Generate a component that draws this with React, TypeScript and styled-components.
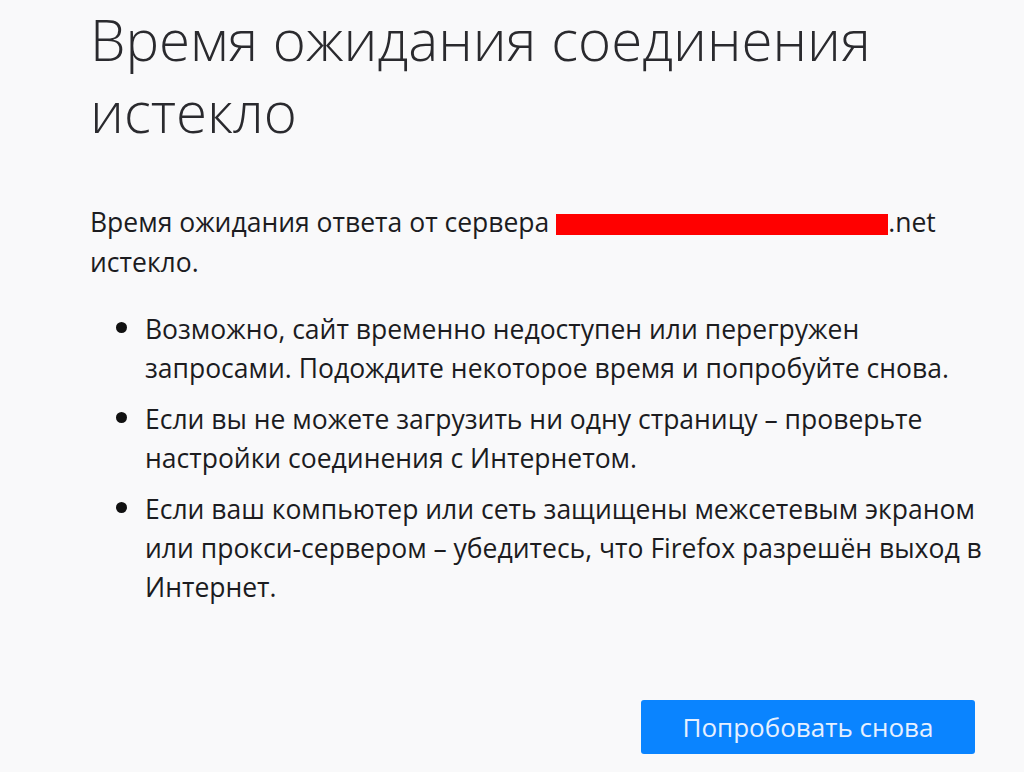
import styled, { createGlobalStyle } from 'styled-components';

const GlobalStyle = createGlobalStyle`
  html, body {
    margin: 0;
    padding: 0;
    background: #f9f9fa;
  }
  body {
    font-family: "Open Sans", "Noto Sans", "Liberation Sans", sans-serif;
    color: #1c1c1f;
  }
`;

// each tip is split the same way the original page wraps it
const tips = [
  [
    'Возможно, сайт временно недоступен или перегружен',
    'запросами. Подождите некоторое время и попробуйте снова.',
  ],
  [
    'Если вы не можете загрузить ни одну страницу – проверьте',
    'настройки соединения с Интернетом.',
  ],
  [
    'Если ваш компьютер или сеть защищены межсетевым экраном',
    'или прокси-сервером – убедитесь, что Firefox разрешён выход в',
    'Интернет.',
  ],
];

export default function App() {
  return (
    <Page>
      <GlobalStyle />
      <Container>
        <Title>Время ожидания соединения истекло</Title>
        <Description>
          <Line>
            Время ожидания ответа от сервера <Redacted />.net
          </Line>
          <Line>истекло.</Line>
        </Description>
        <TipList>
          {tips.map((lines, i) => (
            <Tip key={i}>
              {lines.map((line) => (
                <Line key={line}>{line}</Line>
              ))}
            </Tip>
          ))}
        </TipList>
        <ButtonRow>
          <RetryButton>Попробовать снова</RetryButton>
        </ButtonRow>
      </Container>
    </Page>
  );
}

const Page = styled.div`
  min-height: 100vh;
  background: #f9f9fa;
`;

const Container = styled.div`
  width: 885px;
  padding: 4px 0 0 90px;
`;

const Title = styled.h1`
  margin: 0;
  max-width: 820px;
  font-size: 56.5px;
  font-weight: 300;
  line-height: 72px;
  color: #2a2a2e;
`;

const Description = styled.p`
  margin: 54px 0 0;
  font-size: 26.5px;
  line-height: 40px;
`;

const Line = styled.span`
  display: block;
  white-space: nowrap;
`;

const Redacted = styled.span`
  display: inline-block;
  width: 332px;
  height: 21px;
  background: #ff0000;
  vertical-align: -3px;
`;

const TipList = styled.ul`
  margin: 26px 0 0;
  padding: 0 0 0 55px;
  font-size: 26.5px;
  line-height: 39px;
`;

const Tip = styled.li`
  margin-bottom: 10px;
  &:last-child {
    margin-bottom: 0;
  }
  &::marker {
    font-size: 31px;
    color: #111;
  }
`;

const ButtonRow = styled.div`
  display: flex;
  justify-content: flex-end;
  margin-top: 93px;
`;

const RetryButton = styled.button`
  width: 334px;
  height: 54px;
  border: none;
  border-radius: 3px;
  background: #0a84ff;
  color: #e6f0ff;
  font-family: "Open Sans", "Noto Sans", sans-serif;
  font-size: 26px;
  cursor: pointer;
`;
